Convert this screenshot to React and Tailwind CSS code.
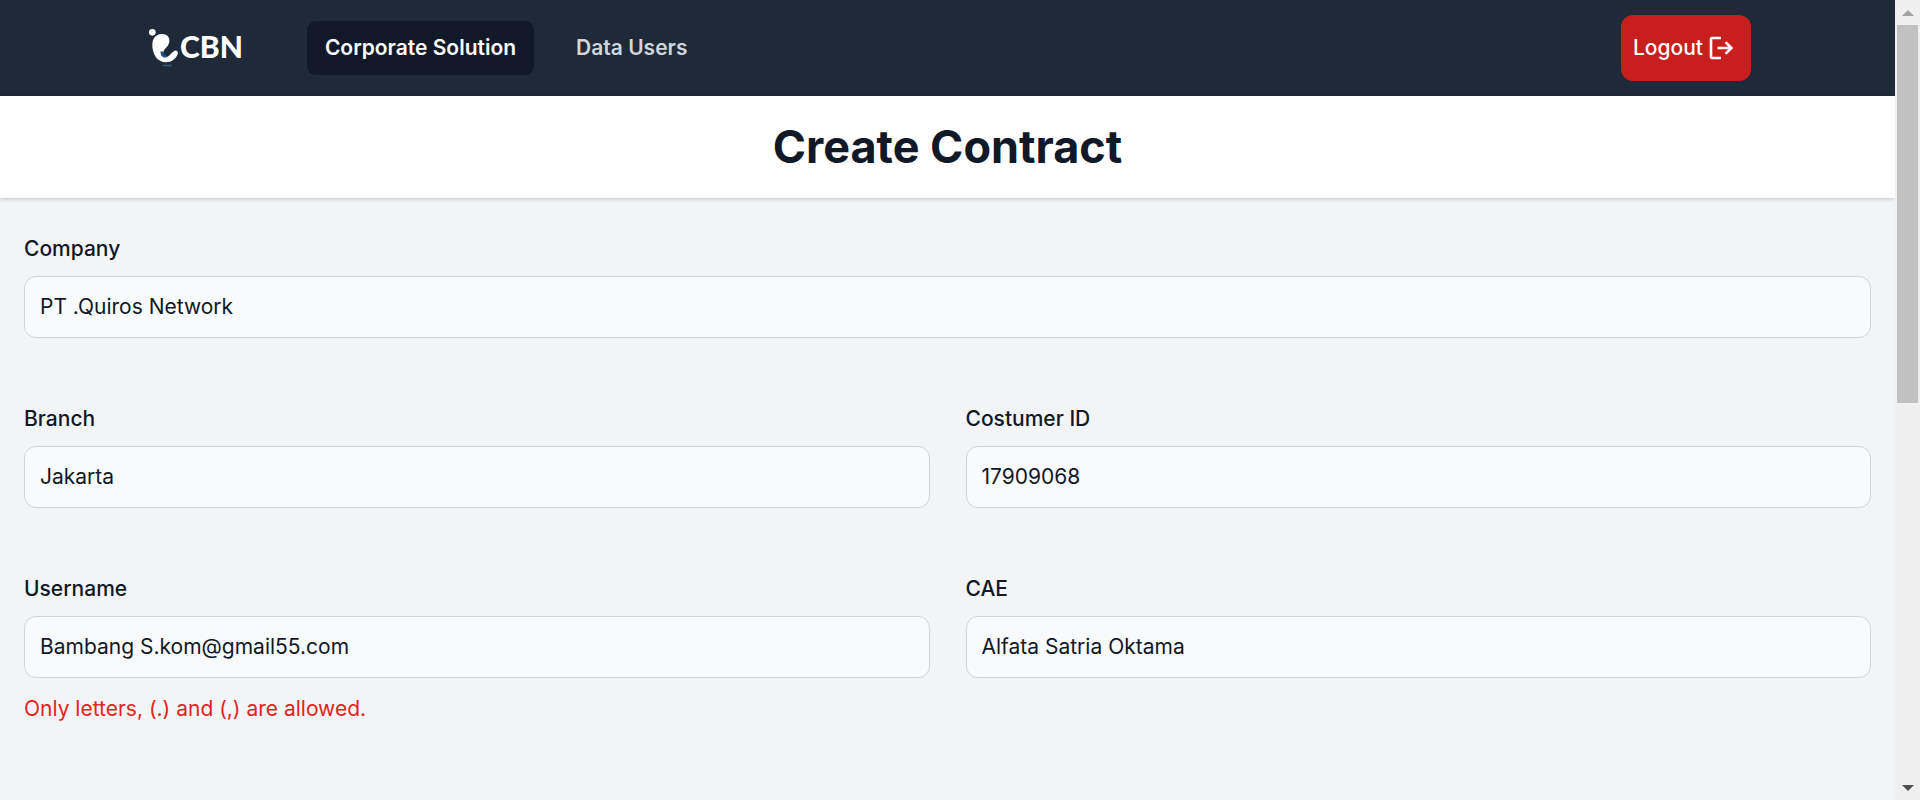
import React from "react";

function Logo() {
  return (
    <a href="#" aria-label="CBN" className="flex items-center pl-[5px] text-white">
      <svg viewBox="27 27 90 114" className="h-[38px] w-[30px]" aria-hidden="true">
        <circle cx="37" cy="37" r="10" fill="#fff" />
        <path
          d="M67 42C80 42 90 51 88 65C86 79 75 84 71 93C69 101 71 109 79 110C88 111 94 96 104 92C111 90 116 96 113 103C107 117 95 127 78 127C52 127 36 102 37 72C38 52 50 42 67 42Z"
          fill="#fff"
        />
        <path d="M62 94C60 110 72 118 86 109C79 110 73 106 71 95Z" fill="#1d4f86" />
        <rect x="68" y="134" width="27" height="5" fill="#37577a" />
      </svg>
      <span className="pb-1 pl-px font-[Lato,sans-serif] text-[30px] leading-9 font-black">CBN</span>
    </a>
  );
}

function LogoutIcon() {
  return (
    <svg viewBox="0 0 24 24" className="size-6" fill="none" stroke="currentColor" strokeWidth="2.600" aria-hidden="true">
      <path d="M12 2H3Q2 2 2 3V21Q2 22 3 22H12" />
      <path d="M8.500 12H22M16.500 6.200L22.300 12L16.500 17.800" />
    </svg>
  );
}

function NavBar() {
  return (
    <nav className="flex h-24 items-center bg-[#1f2937] px-36">
      <Logo />
      <div className="ml-16 flex gap-6">
        <a href="#" aria-current="page" className="rounded-[9px] bg-[#111827] px-[18px] py-3 font-semibold text-white">
          Corporate Solution
        </a>
        <a href="#" className="rounded-[9px] px-[18px] py-3 font-semibold text-gray-300">
          Data Users
        </a>
      </div>
      <button
        type="button"
        className="ml-auto flex h-[66px] items-center gap-1.5 rounded-xl bg-[#c81e1e] pr-[18px] pl-3 font-medium text-white"
      >
        Logout
        <LogoutIcon />
      </button>
    </nav>
  );
}

function Field({ id, label, value, error, className = "" }) {
  return (
    <div className={className}>
      <label htmlFor={id} className="mb-3 block font-medium text-[#111827]">
        {label}
      </label>
      <input
        id={id}
        type="text"
        defaultValue={value}
        aria-describedby={error ? id + "-error" : undefined}
        className="block h-[62px] w-full rounded-xl border border-[#d1d5db] bg-[#f9fafb] px-[15px] pt-0 pb-0.5 text-[#111827]"
      />
      {error && (
        <p id={id + "-error"} className="mt-4 text-[#e02424]">
          {error}
        </p>
      )}
    </div>
  );
}

function ScrollBar() {
  return (
    <div aria-hidden="true" className="flex w-[25px] shrink-0 flex-col items-center bg-[#f0f0f0]">
      <div className="flex h-[25px] items-center justify-center">
        <svg viewBox="0 0 12 6" className="h-[6px] w-3" fill="#a3a3a3">
          <path d="M0 6L6 0L12 6Z" />
        </svg>
      </div>
      <div className="h-[378px] w-[21px] bg-[#c1c1c1]" />
      <div className="mt-auto flex h-[25px] items-center justify-center">
        <svg viewBox="0 0 12 6" className="h-[6px] w-3" fill="#505050">
          <path d="M0 0L6 6L12 0Z" />
        </svg>
      </div>
    </div>
  );
}

export default function App() {
  return (
    <div className="flex min-h-screen bg-[#f3f4f6] font-[Inter,sans-serif] text-[21px] leading-[30px]">
      <div className="min-w-0 flex-1">
        <NavBar />
        <header className="bg-white py-6 shadow-[0_1px_4px_rgba(0,0,0,0.2)]">
          <h1 className="text-center text-[45px] leading-[54px] font-bold text-[#111827]">Create Contract</h1>
        </header>
        <main>
          <form className="grid grid-cols-2 gap-x-9 gap-y-[66px] px-6 py-9">
            <Field id="company" label="Company" value="PT .Quiros Network" className="col-span-2" />
            <Field id="branch" label="Branch" value="Jakarta" />
            <Field id="customer-id" label="Costumer ID" value="17909068" />
            <Field
              id="username"
              label="Username"
              value="Bambang S.kom@gmail55.com"
              error="Only letters, (.) and (,) are allowed."
            />
            <Field id="cae" label="CAE" value="Alfata Satria Oktama" />
          </form>
        </main>
      </div>
      <ScrollBar />
    </div>
  );
}
